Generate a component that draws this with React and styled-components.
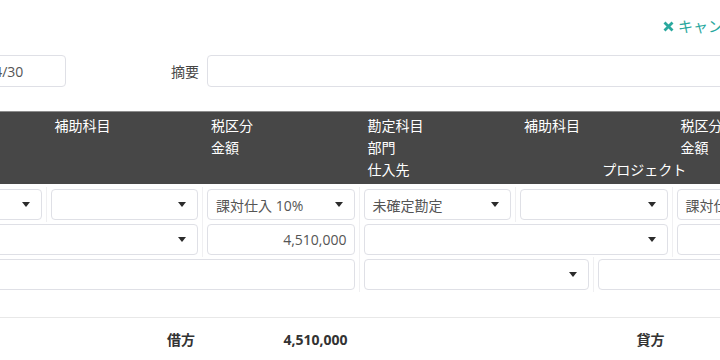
import React from "react";
import styled, { createGlobalStyle } from "styled-components";

const GlobalStyle = createGlobalStyle`
  body {
    margin: 0;
    background: #fff;
    font-family: "Open Sans", "Noto Sans CJK JP", sans-serif;
    font-size: 14px;
    color: #555;
  }
`;

const Viewport = styled.div`
  width: 720px;
  height: 360px;
  overflow: hidden;
`;
const Page = styled.div`
  width: 940px;
  margin-left: -110px;
`;

const TopBar = styled.div`
  display: flex;
  justify-content: flex-end;
  padding: 16px 77px 0 0;
  height: 20px;
  line-height: 20px;
`;
const CancelLink = styled.a`
  display: flex;
  align-items: center;
  gap: 4px;
  color: #2aa89e;
  font-size: 15px;
  text-decoration: none;
  cursor: pointer;
`;

const FormRow = styled.div`
  display: flex;
  align-items: center;
  gap: 105px;
  margin-top: 19px;
  padding-left: 14px;
`;
const Field = styled.div`
  display: flex;
  align-items: center;
  gap: 8px;
  flex: ${(p) => (p.$grow ? 1 : "none")};
`;
const Label = styled.span`
  color: #444;
  white-space: nowrap;
`;
const TextInput = styled.div`
  height: ${(p) => p.$h || 32}px;
  box-sizing: border-box;
  width: ${(p) => (p.$w ? `${p.$w}px` : "auto")};
  flex: ${(p) => (p.$w ? "none" : 1)};
  border: 1px solid #dfe0e6;
  border-radius: 4px;
  padding: 0 ${(p) => (p.$right ? 7 : 8)}px 0 8px;
  display: flex;
  align-items: center;
  justify-content: ${(p) => (p.$right ? "flex-end" : "flex-start")};
  color: #555;
  background: #fff;
`;

const HeaderBar = styled.div`
  margin-top: 24px;
  display: flex;
  background: #474747;
  border-top: 1px solid #8c8c8c;
  padding: 3px 0;
`;
const HeaderSide = styled.div`
  display: grid;
  grid-template-columns: repeat(6, 78.25px);
  grid-auto-rows: 22px;
  line-height: 22px;
  color: #fff;
`;
const HeadCell = styled.div`
  grid-column: span ${(p) => p.$span || 2};
  padding: 0 8px;
  white-space: nowrap;
`;

const Body = styled.div`
  display: flex;
  padding: 3px 0 25px;
  border-bottom: 1px solid #e8e8e8;
`;
const BodySide = styled.div`
  display: grid;
  grid-template-columns: repeat(6, 78.25px);
  grid-auto-rows: 35px;
`;
const Cell = styled.div`
  grid-column: span ${(p) => p.$span || 2};
  box-sizing: border-box;
  padding: 2px 4px;
  border-right: 1px solid #f0f0f2;
  display: flex;
`;
const SelectBox = styled.div`
  flex: 1;
  height: 31px;
  box-sizing: border-box;
  border: 1px solid #dfe0e6;
  border-radius: 4px;
  display: flex;
  align-items: center;
  justify-content: space-between;
  padding: 0 11px 0 8px;
  color: #555;
  background: #fff;
  white-space: nowrap;
`;
const Caret = styled.span`
  width: 0;
  height: 0;
  border-left: 4px solid transparent;
  border-right: 4px solid transparent;
  border-top: 5px solid #2b2b2b;
`;

const Totals = styled.div`
  display: flex;
  padding-top: 12px;
  line-height: 20px;
`;
const TotalSide = styled.div`
  display: grid;
  grid-template-columns: repeat(3, 156.5px);
`;
const TotalCell = styled.div`
  text-align: right;
  padding-right: ${(p) => (p.$amount ? 12 : 8)}px;
  font-weight: 700;
  color: #333;
`;

const Select = ({ value }) => (
  <SelectBox>
    <span>{value}</span>
    <Caret />
  </SelectBox>
);

const XIcon = () => (
  <svg width="11" height="11" viewBox="0 0 11 11">
    <path d="M1.5 1.5 L9.5 9.5 M9.5 1.5 L1.5 9.5" stroke="#2aa89e" strokeWidth="2.8" />
  </svg>
);

export default function App() {
  return (
    <Viewport>
      <GlobalStyle />
      <Page>
        <TopBar>
          <CancelLink>
            <XIcon />
            キャンセル
          </CancelLink>
        </TopBar>

        <FormRow>
          <Field>
            <Label>日付</Label>
            <TextInput $w={126}>2024/04/30</TextInput>
          </Field>
          <Field $grow>
            <Label>摘要</Label>
            <TextInput />
          </Field>
        </FormRow>

        <HeaderBar>
          <HeaderSide>
            <HeadCell>勘定科目</HeadCell>
            <HeadCell>補助科目</HeadCell>
            <HeadCell>税区分</HeadCell>
            <HeadCell $span={4}>部門</HeadCell>
            <HeadCell>金額</HeadCell>
            <HeadCell $span={6}>品目</HeadCell>
          </HeaderSide>
          <HeaderSide>
            <HeadCell>勘定科目</HeadCell>
            <HeadCell>補助科目</HeadCell>
            <HeadCell>税区分</HeadCell>
            <HeadCell $span={4}>部門</HeadCell>
            <HeadCell>金額</HeadCell>
            <HeadCell $span={3}>仕入先</HeadCell>
            <HeadCell $span={3}>プロジェクト</HeadCell>
          </HeaderSide>
        </HeaderBar>

        <Body>
          <BodySide>
            <Cell><Select value="仕入高" /></Cell>
            <Cell><Select value="" /></Cell>
            <Cell><Select value="課対仕入 10%" /></Cell>
            <Cell $span={4}><Select value="" /></Cell>
            <Cell><TextInput $h={31} $right>4,510,000</TextInput></Cell>
            <Cell $span={6}><TextInput $h={31} /></Cell>
          </BodySide>
          <BodySide>
            <Cell><Select value="未確定勘定" /></Cell>
            <Cell><Select value="" /></Cell>
            <Cell><Select value="課対仕入 10%" /></Cell>
            <Cell $span={4}><Select value="" /></Cell>
            <Cell><TextInput $h={31} $right>4,510,000</TextInput></Cell>
            <Cell $span={3}><Select value="" /></Cell>
            <Cell $span={3}><TextInput $h={31} /></Cell>
          </BodySide>
        </Body>

        <Totals>
          <TotalSide>
            <TotalCell />
            <TotalCell>借方</TotalCell>
            <TotalCell $amount>4,510,000</TotalCell>
          </TotalSide>
          <TotalSide>
            <TotalCell />
            <TotalCell>貸方</TotalCell>
            <TotalCell $amount>4,510,000</TotalCell>
          </TotalSide>
        </Totals>
      </Page>
    </Viewport>
  );
}
